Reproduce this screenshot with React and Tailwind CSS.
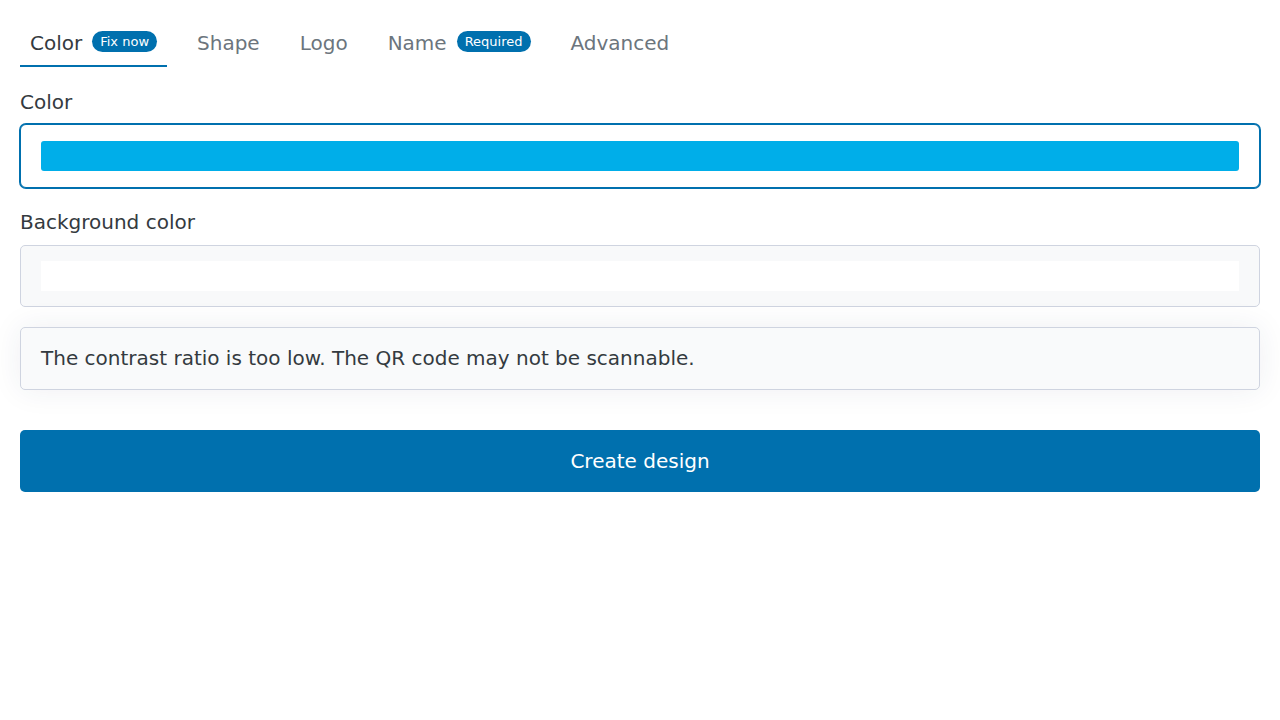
import React from "react";

const tabs = [
  { label: "Color", badge: "Fix now", active: true },
  { label: "Shape" },
  { label: "Logo" },
  { label: "Name", badge: "Required" },
  { label: "Advanced" },
];

function Tab({ label, badge, active }) {
  return (
    <button
      className={`flex items-center px-[10px] pt-[11px] pb-[9px] border-b-2 text-[20px] leading-[25px] ${
        active
          ? "border-[#0070ae] text-[#343a40]"
          : "border-transparent text-[#6c757d]"
      }`}
    >
      <span>{label}</span>
      {badge && (
        <span className="ml-[10px] -translate-y-[2px] rounded-full bg-[#0070ae] px-[8px] text-[13px] leading-[21px] text-white">
          {badge}
        </span>
      )}
    </button>
  );
}

export default function App() {
  return (
    <div
      className="min-h-screen bg-white p-5 text-[#343a40]"
      style={{ fontFamily: "'DejaVu Sans', sans-serif" }}
    >
      {/* Tabs */}
      <div className="flex gap-5">
        {tabs.map((t) => (
          <Tab key={t.label} {...t} />
        ))}
      </div>

      {/* Form */}
      <div className="mt-5 flex flex-col">
        <label className="mb-[7px] text-[20px] leading-[30px]">Color</label>
        <div className="rounded-md border border-[#0070ae] bg-white px-5 py-4 ring-1 ring-[#0070ae]">
          <div className="h-[30px] rounded-[3px] bg-[#00aee9]"></div>
        </div>

        <label className="mt-[19px] mb-[8px] text-[20px] leading-[30px]">
          Background color
        </label>
        <div className="rounded-[5px] border border-[#cfd4e0] bg-[#f8f9fa] px-5 py-[15px]">
          <div className="h-[30px] bg-white"></div>
        </div>

        {/* Warning */}
        <div className="mt-5 rounded-[5px] border border-[#cfd4e0] bg-[#f9fafb] px-5 pt-[15px] pb-[16px] text-[20px] leading-[30px] shadow-[0_0_30px_rgba(40,50,90,0.08)]">
          The contrast ratio is too low. The QR code may not be scannable.
        </div>

        <button className="mt-10 rounded-[5px] bg-[#0070ae] py-4 text-[20px] leading-[30px] text-white">
          Create design
        </button>
      </div>
    </div>
  );
}
